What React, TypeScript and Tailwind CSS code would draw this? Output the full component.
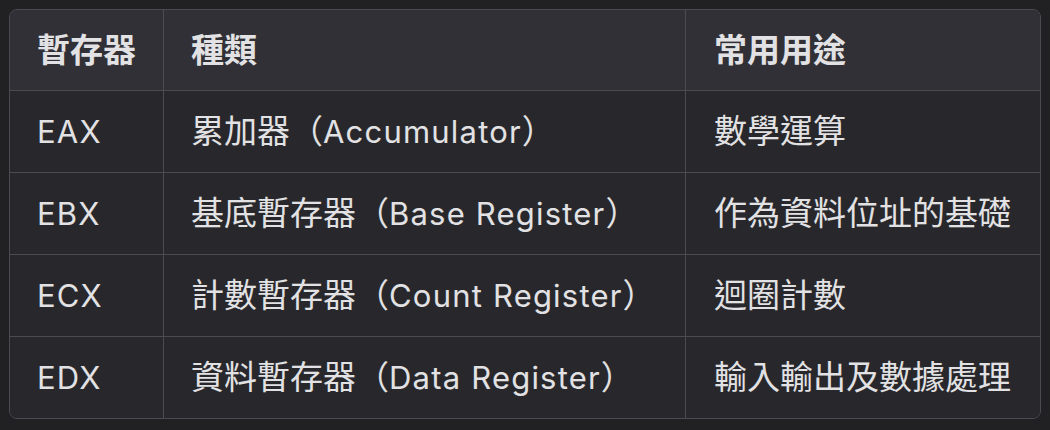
const rows = [
  { reg: "EAX", kind: "累加器（Accumulator）", use: "數學運算" },
  { reg: "EBX", kind: "基底暫存器（Base Register）", use: "作為資料位址的基礎" },
  { reg: "ECX", kind: "計數暫存器（Count Register）", use: "迴圈計數" },
  { reg: "EDX", kind: "資料暫存器（Data Register）", use: "輸入輸出及數據處理" },
];

// CJK runs a touch larger, Latin runs with a bit of tracking, like the shot
function Mixed({ text }: { text: string }) {
  const parts = text.split(/([\u3000-\u9fff\uff00-\uffef]+)/).filter(Boolean);
  return (
    <>
      {parts.map((p, i) =>
        /[\u3000-\u9fff\uff00-\uffef]/.test(p) ? (
          <span key={i} className="text-[33px]">
            {p}
          </span>
        ) : (
          <span key={i} className="tracking-[1.2px]">
            {p}
          </span>
        ),
      )}
    </>
  );
}

export default function App() {
  return (
    <div
      className="h-[430px] w-[1050px] bg-[#212124] p-[9px] text-[31px] leading-none text-[#e2e2e4]"
      style={{ fontFamily: '"Inter", "Noto Sans CJK TC", sans-serif' }}
    >
      <div className="overflow-hidden rounded-[8px] border border-[#4b4b52]">
        <table className="w-full border-separate border-spacing-0 text-left">
          <colgroup>
            <col className="w-[154px]" />
            <col className="w-[522px]" />
            <col />
          </colgroup>
          <thead className="bg-[#303036]">
            <tr className="h-[81px]">
              <th className="border-r border-b border-[#4b4b52] pl-[27px] font-bold">
                <Mixed text="暫存器" />
              </th>
              <th className="border-r border-b border-[#4b4b52] pl-[27px] font-bold">
                <Mixed text="種類" />
              </th>
              <th className="border-b border-[#4b4b52] pl-[28px] font-bold">
                <Mixed text="常用用途" />
              </th>
            </tr>
          </thead>
          <tbody className="bg-[#28282c]">
            {rows.map((r, i) => {
              const last = i === rows.length - 1;
              return (
                <tr key={r.reg} className={last ? "h-[81px]" : "h-[82px]"}>
                  <td className={`${last ? "" : "border-b"} border-r border-[#4b4b52] pl-[27px]`}>
                    <Mixed text={r.reg} />
                  </td>
                  <td className={`${last ? "" : "border-b"} border-r border-[#4b4b52] pl-[27px]`}>
                    <Mixed text={r.kind} />
                  </td>
                  <td className={`${last ? "" : "border-b"} border-[#4b4b52] pl-[28px]`}>
                    <Mixed text={r.use} />
                  </td>
                </tr>
              );
            })}
          </tbody>
        </table>
      </div>
    </div>
  );
}
